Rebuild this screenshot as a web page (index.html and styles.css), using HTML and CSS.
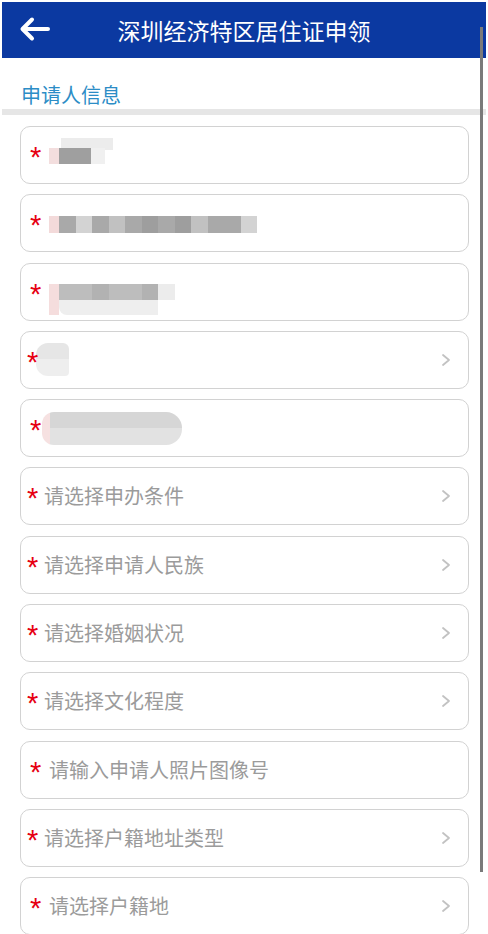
FILE: index.html
```html
<!DOCTYPE html>
<html lang="zh-CN">
<head>
<meta charset="utf-8">
<title>深圳经济特区居住证申领</title>
<link rel="stylesheet" href="styles.css">
</head>
<body>
<div class="page">
  <header class="topbar">
    <svg class="back" width="32" height="26" viewBox="0 0 32 26"><path d="M29 13H4M13 3.5L3.5 13L13 22.5" fill="none" stroke="#fff" stroke-width="4" stroke-linecap="round" stroke-linejoin="round"/></svg>
    <h1 class="title">深圳经济特区居住证申领</h1>
  </header>
  <div class="section-title">申请人信息</div>
  <div class="divider"></div>
  <main class="form">
    <div class="field inp">
      <span class="star">*</span>
      <div class="blur b1"><i class="g3"></i><i class="g1"></i></div>
    </div>
    <div class="field inp">
      <span class="star">*</span>
      <div class="blur b2"><i class="g3"></i><i class="g1"></i><i class="g3"></i><i class="g2"></i><i class="g3"></i><i class="g4"></i><i class="g3"></i><i class="g4"></i><i class="g2"></i><i class="g3"></i><i class="g3"></i><i class="g1"></i></div>
    </div>
    <div class="field inp">
      <span class="star">*</span>
      <div class="blur b3"><div class="row"><i class="g2"></i><i class="g2"></i><i class="g3"></i><i class="g2"></i><i class="g2"></i><i class="g3"></i><i class="g0"></i></div><div class="row low"><i class="g0"></i><i class="g0"></i><i class="g0"></i><i class="g0"></i><i class="g0"></i><i class="g0"></i></div></div>
    </div>
    <div class="field sel">
      <span class="star">*</span>
      <div class="blur b4"></div>
      <svg class="chev" width="10" height="14" viewBox="0 0 10 14"><path d="M2 2L8 7L2 12" fill="none" stroke="#c2c2c2" stroke-width="1.8" stroke-linecap="round" stroke-linejoin="round"/></svg>
    </div>
    <div class="field inp">
      <span class="star">*</span>
      <div class="blur b5"></div>
    </div>
    <div class="field sel">
      <span class="star">*</span><span class="label">请选择申办条件</span>
      <svg class="chev" width="10" height="14" viewBox="0 0 10 14"><path d="M2 2L8 7L2 12" fill="none" stroke="#c2c2c2" stroke-width="1.8" stroke-linecap="round" stroke-linejoin="round"/></svg>
    </div>
    <div class="field sel">
      <span class="star">*</span><span class="label">请选择申请人民族</span>
      <svg class="chev" width="10" height="14" viewBox="0 0 10 14"><path d="M2 2L8 7L2 12" fill="none" stroke="#c2c2c2" stroke-width="1.8" stroke-linecap="round" stroke-linejoin="round"/></svg>
    </div>
    <div class="field sel">
      <span class="star">*</span><span class="label">请选择婚姻状况</span>
      <svg class="chev" width="10" height="14" viewBox="0 0 10 14"><path d="M2 2L8 7L2 12" fill="none" stroke="#c2c2c2" stroke-width="1.8" stroke-linecap="round" stroke-linejoin="round"/></svg>
    </div>
    <div class="field sel">
      <span class="star">*</span><span class="label">请选择文化程度</span>
      <svg class="chev" width="10" height="14" viewBox="0 0 10 14"><path d="M2 2L8 7L2 12" fill="none" stroke="#c2c2c2" stroke-width="1.8" stroke-linecap="round" stroke-linejoin="round"/></svg>
    </div>
    <div class="field inp">
      <span class="star">*</span><span class="label">请输入申请人照片图像号</span>
    </div>
    <div class="field sel">
      <span class="star">*</span><span class="label">请选择户籍地址类型</span>
      <svg class="chev" width="10" height="14" viewBox="0 0 10 14"><path d="M2 2L8 7L2 12" fill="none" stroke="#c2c2c2" stroke-width="1.8" stroke-linecap="round" stroke-linejoin="round"/></svg>
    </div>
    <div class="field inp">
      <span class="star">*</span><span class="label">请选择户籍地</span>
      <svg class="chev" width="10" height="14" viewBox="0 0 10 14"><path d="M2 2L8 7L2 12" fill="none" stroke="#c2c2c2" stroke-width="1.8" stroke-linecap="round" stroke-linejoin="round"/></svg>
    </div>
  </main>
  <div class="scrollbar"></div>
</div>
</body>
</html>
```

FILE: styles.css
```css
* { box-sizing: border-box; }
html, body { margin: 0; padding: 0; background: #fff; }
body {
  font-family: "Noto Sans CJK SC", "Noto Sans", sans-serif;
  overflow: hidden;
  height: 934px;
}
.page {
  position: relative;
  padding: 2px 2px 0 2px;
  height: 934px;
  overflow: hidden;
}
.topbar {
  height: 56px;
  background: #0b39a1;
  display: flex;
  align-items: center;
  position: relative;
}
.back {
  margin-left: 17px;
  margin-top: -2px;
  flex: none;
}
.title {
  margin: 0;
  font-size: 23px;
  font-weight: 400;
  color: #fff;
  position: absolute;
  left: 0;
  right: 0;
  text-align: center;
  top: 12px;
  line-height: 32px;
  letter-spacing: 0;
}
.section-title {
  padding: 25px 0 2px 19px;
  font-size: 20px;
  line-height: 24px;
  color: #2c8dc6;
}
.divider {
  height: 6px;
  background: #e6e6e6;
}
.form {
  padding: 11px 17px 0 18px;
  display: flex;
  flex-direction: column;
  gap: 10.3px;
}
.field {
  height: 58px;
  border: 1px solid #d2d2d2;
  border-radius: 10px;
  display: flex;
  align-items: center;
  flex: none;
  position: relative;
}
.field.sel { padding-left: 6px; }
.field.inp { padding-left: 9px; }
.star {
  color: #e60012;
  font-family: "Liberation Sans", sans-serif;
  font-size: 29px;
  line-height: 20px;
  height: 14px;
  width: 12px;
  overflow: visible;
  display: inline-block;
  transform: translateY(-1px);
  flex: none;
}
.field.sel .star { margin-right: 5px; }
.field.inp .star { margin-right: 7px; }
.label {
  font-size: 20px;
  color: #9b9b9b;
  line-height: 28px;
  white-space: nowrap;
}
.chev {
  position: absolute;
  right: 17px;
  top: 50%;
  margin-top: -7px;
}
.blur { display: flex; }
.blur i { display: block; height: 100%; width: 10px; }
.g0 { background: #ececec; }
.g1 { background: #d3d3d3; }
.g2 { background: #c1c1c1; }
.g3 { background: #a9a9a9; }
.g4 { background: #9e9e9e; }
.b1 {
  height: 16px;
  margin-top: 2px;
  background: #f3dede;
  padding-left: 10px;
  width: 56px;
  box-shadow: 10px -12px 0 -2px #ececec;
}
.b1 .g3 { width: 32px; background: #9f9f9f; }
.b1 .g1 { width: 14px; background: #f0f0f0; }
.b2 {
  height: 17px;
  margin-top: 2px;
  background: #f3dada;
  padding-left: 10px;
}
.b2 i { width: 16.5px; }
.b3 {
  flex-direction: column;
  padding-left: 10px;
  background: linear-gradient(90deg, #f5dddd 0 10px, transparent 10px);
  margin-top: 16px;
}
.b3 .row { display: flex; height: 16px; }
.b3 .row i { width: 16.5px; }
.b3 .row.low { height: 15px; border-radius: 0 0 10px 8px; overflow: hidden; }
.b3 .row.low i { background: #eeeeee; }
.b3 .row .g2 { background: #bdbdbd; }
.b3 .row .g3 { background: #b2b2b2; }
.b4 {
  width: 33px;
  height: 33px;
  margin-left: -8px;
  background: linear-gradient(180deg, #e6e6e6 0 50%, #eeeeee 50%);
  border-radius: 12px 6px 4px 12px;
}
.b5 {
  width: 140px;
  height: 33px;
  margin-left: -7px;
  border-radius: 12px 16px 16px 12px;
  background:
    linear-gradient(90deg, #f6e1e1 0 8px, transparent 8px),
    linear-gradient(180deg, #d6d6d6 0 50%, #e2e2e2 50%);
}
.scrollbar {
  position: absolute;
  left: 480px;
  top: 27px;
  width: 3px;
  height: 845px;
  background: #7a7a7a;
}
```
